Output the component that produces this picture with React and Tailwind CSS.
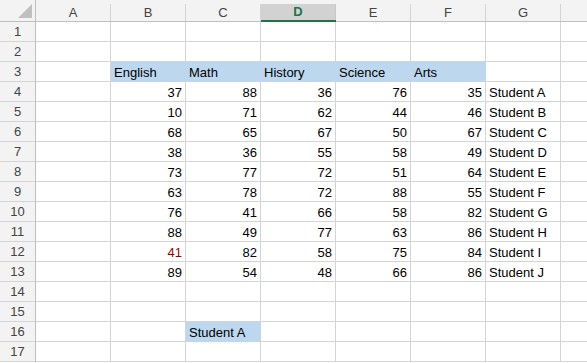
import React from 'react';

const cols = ['A', 'B', 'C', 'D', 'E', 'F', 'G', ''];

const scores = [
  [37, 88, 36, 76, 35, 'Student A'],
  [10, 71, 62, 44, 46, 'Student B'],
  [68, 65, 67, 50, 67, 'Student C'],
  [38, 36, 55, 58, 49, 'Student D'],
  [73, 77, 72, 51, 64, 'Student E'],
  [63, 78, 72, 88, 55, 'Student F'],
  [76, 41, 66, 58, 82, 'Student G'],
  [88, 49, 77, 63, 86, 'Student H'],
  [41, 82, 58, 75, 84, 'Student I'],
  [89, 54, 48, 66, 86, 'Student J'],
];

// build a map of row -> array of 8 cells {v, align, fill, red}
const buildRows = () => {
  const rows = [];
  for (let r = 1; r <= 17; r++) {
    const cells = cols.map(() => ({ v: '', align: 'left', fill: false }));
    if (r === 3) {
      ['English', 'Math', 'History', 'Science', 'Arts'].forEach((t, i) => {
        cells[i + 1] = { v: t, align: 'left', fill: true };
      });
    }
    if (r >= 4 && r <= 13) {
      const d = scores[r - 4];
      for (let i = 0; i < 5; i++) {
        cells[i + 1] = { v: d[i], align: 'right', fill: false, red: r === 12 && i === 0 };
      }
      cells[6] = { v: d[5], align: 'left', fill: false };
    }
    if (r === 16) {
      cells[2] = { v: 'Student A', align: 'left', fill: true };
    }
    rows.push({ n: r, cells });
  }
  return rows;
};

const Cell = ({ cell }) => (
  <div
    className={
      'w-[75px] h-[20px] shrink-0 border-r border-b flex items-center pt-[1px] px-[3px] text-[13px] leading-none ' +
      (cell.fill ? 'bg-[#bdd7ee] border-[#bdd7ee] ' : 'bg-white border-[#d4d4d4] ') +
      (cell.align === 'right' ? 'justify-end ' : 'justify-start ') +
      (cell.red ? 'text-[#9c0006]' : 'text-black')
    }
  >
    {cell.v}
  </div>
);

export default function App() {
  const rows = buildRows();
  return (
    <div
      className="w-[587px] h-[363px] overflow-hidden bg-white"
      style={{ fontFamily: '"Liberation Sans", Arial, sans-serif' }}
    >
      {/* column header */}
      <div className="flex h-[22px]">
        <div className="w-[36px] h-[22px] shrink-0 bg-[#f3f3f3] border-r border-b border-[#bfbfbf] flex items-end justify-end pb-[3px] pr-[3px]">
          <svg width="14" height="14" viewBox="0 0 14 14">
            <polygon points="14,0 14,14 0,14" fill="#bfbfbf" />
          </svg>
        </div>
        {cols.map((c) =>
          c === 'D' ? (
            <div key={c} className="w-[75px] h-[22px] shrink-0 bg-[#f3f3f3] border-b-2 border-[#217346] pt-[4px] flex">
              <div className="flex-1 bg-[#d2d2d2] border-r border-[#c8c8c8] flex items-center justify-center text-[13px] font-bold text-[#217346]">
                {c}
              </div>
            </div>
          ) : (
            <div key={c + 'h'} className="w-[75px] h-[22px] shrink-0 bg-[#f3f3f3] border-b border-[#bfbfbf] pt-[4px] flex">
              <div className="flex-1 border-r border-[#d4d4d4] flex items-center justify-center text-[13px] text-[#444444]">
                {c}
              </div>
            </div>
          )
        )}
      </div>

      {rows.map((row) => (
        <div key={row.n} className="flex h-[20px]">
          <div className="w-[36px] h-[20px] shrink-0 bg-[#f3f3f3] border-r border-[#bfbfbf] flex">
            <div className="flex-1 border-b border-[#d4d4d4] flex items-center justify-center pt-[1px] text-[13px] text-[#444444]">
              {row.n}
            </div>
          </div>
          {row.cells.map((cell, i) => (
            <Cell key={i} cell={cell} />
          ))}
        </div>
      ))}
    </div>
  );
}
